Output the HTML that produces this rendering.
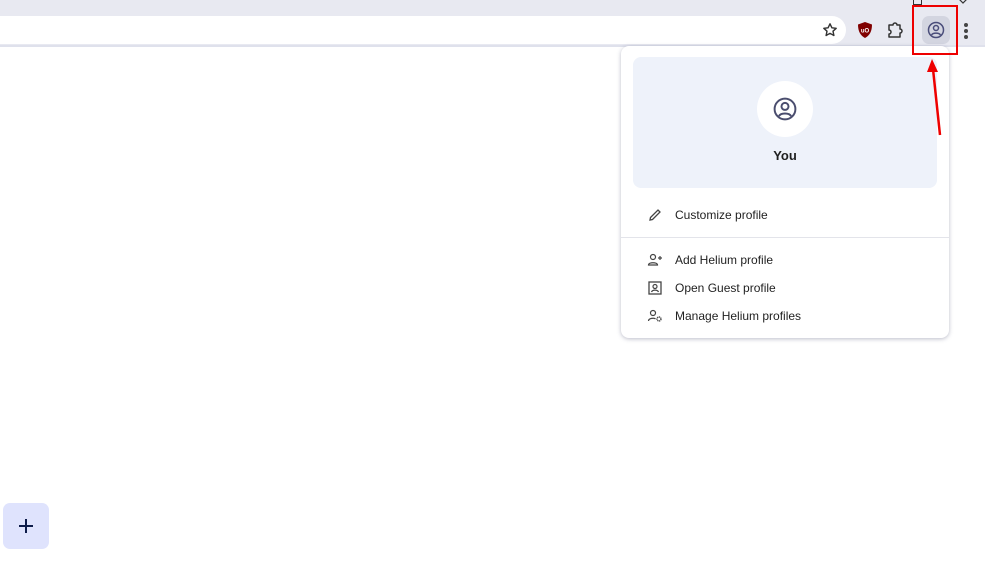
<!DOCTYPE html>
<html><head><style>
body{margin:0;width:985px;height:565px;background:#fff;position:relative;overflow:hidden;font-family:"Liberation Sans",sans-serif;}
.abs{position:absolute}
.item{position:absolute;left:675px;font-size:12px;color:#1f1f1f}
</style></head><body>
<div class="abs" style="left:0;top:0;width:985px;height:46px;background:#e8e9f1"></div>
<div class="abs" style="left:0;top:16px;width:846px;height:28px;background:#fff;border-radius:0 14px 14px 0"></div>
<div class="abs" style="left:0;top:45px;width:985px;height:2px;background:#dfe1ec"></div>
<svg class="abs" style="left:822px;top:22px" width="16" height="16" viewBox="0 0 16 16"><path d="M8 1.8l1.9 4 4.3.5-3.2 2.9.9 4.3L8 11.3 4.1 13.5 5 9.2 1.8 6.3l4.3-.5z" fill="none" stroke="#333" stroke-width="1.4" stroke-linejoin="round"/></svg>
<svg class="abs" style="left:857px;top:21px" width="16" height="18" viewBox="0 0 16 18"><path d="M8 1l7 2.5c0 7-2.5 11-7 13.5C3.5 14.5 1 10.5 1 3.5z" fill="#800000"/><text x="8" y="11.5" font-size="6" fill="#fff" text-anchor="middle" font-weight="bold" font-family="Liberation Sans">uO</text></svg>
<svg class="abs" style="left:886px;top:21px" width="18" height="18" viewBox="0 0 18 18"><path d="M3 4h4a2 2 0 014 0h3v4a2 2 0 010 4v4H3v-3a2 2 0 000-4z" fill="none" stroke="#333" stroke-width="1.5" stroke-linejoin="round"/></svg>
<div class="abs" style="left:922px;top:16px;width:28px;height:28px;background:#d3d5e0;border-radius:7px"></div>
<svg class="abs" style="left:926px;top:20px" width="20" height="20" viewBox="0 0 20 20"><circle cx="10" cy="10" r="7.5" fill="none" stroke="#4a4d7a" stroke-width="1.5"/><circle cx="10" cy="8" r="2.5" fill="none" stroke="#4a4d7a" stroke-width="1.5"/><path d="M5.5 15c1.5-2.5 7.5-2.5 9 0" fill="none" stroke="#4a4d7a" stroke-width="1.5"/></svg>
<div class="abs" style="left:964px;top:23px;width:4px;height:4px;border-radius:2px;background:#444"></div>
<div class="abs" style="left:964px;top:29px;width:4px;height:4px;border-radius:2px;background:#444"></div>
<div class="abs" style="left:964px;top:35px;width:4px;height:4px;border-radius:2px;background:#444"></div>
<div class="abs" style="left:913px;top:-3px;width:7px;height:6px;border:1px solid #333"></div>
<svg class="abs" style="left:957px;top:0" width="12" height="5" viewBox="0 0 12 5"><path d="M1 -2l5 5 5-5" fill="none" stroke="#333" stroke-width="1.2"/></svg>
<div class="abs" style="left:621px;top:46px;width:328px;height:292px;background:#fff;border-radius:8px;box-shadow:0 1px 4px rgba(60,64,100,.35)"></div>
<div class="abs" style="left:633px;top:57px;width:304px;height:131px;background:#eef2fa;border-radius:8px"></div>
<div class="abs" style="left:757px;top:81px;width:56px;height:56px;background:#fff;border-radius:50%"></div>
<svg class="abs" style="left:772px;top:96px" width="26" height="26" viewBox="0 0 20 20"><circle cx="10" cy="10" r="8" fill="none" stroke="#4a4d6e" stroke-width="1.5"/><circle cx="10" cy="8" r="2.7" fill="none" stroke="#4a4d6e" stroke-width="1.5"/><path d="M5.3 15.5c1.5-2.7 7.9-2.7 9.4 0" fill="none" stroke="#4a4d6e" stroke-width="1.5"/></svg>
<div class="abs" style="left:633px;top:148px;width:304px;text-align:center;font-size:13px;font-weight:bold;color:#1f1f1f">You</div>
<svg class="abs" style="left:648px;top:208px" width="14" height="14" viewBox="0 0 14 14"><path d="M2 12l.5-2.5L10 2l2 2-7.5 7.5z" fill="none" stroke="#444" stroke-width="1.3"/></svg>
<div class="item" style="top:208px">Customize profile</div>
<div class="abs" style="left:621px;top:237px;width:328px;height:1px;background:#e3e4ea"></div>
<svg class="abs" style="left:647px;top:253px" width="16" height="14" viewBox="0 0 16 14"><circle cx="6" cy="4" r="2.5" fill="none" stroke="#444" stroke-width="1.2"/><path d="M1.5 12c0-3 9-3 9 0z" fill="none" stroke="#444" stroke-width="1.2"/><path d="M11 5h4M13 3v4" stroke="#444" stroke-width="1.2"/></svg>
<div class="item" style="top:253px">Add Helium profile</div>
<svg class="abs" style="left:648px;top:281px" width="14" height="14" viewBox="0 0 14 14"><rect x="1" y="1" width="12" height="12" fill="none" stroke="#444" stroke-width="1.3"/><circle cx="7" cy="5.5" r="2" fill="none" stroke="#444" stroke-width="1.2"/><path d="M3.5 11c1-2.5 6-2.5 7 0" fill="none" stroke="#444" stroke-width="1.2"/></svg>
<div class="item" style="top:281px">Open Guest profile</div>
<svg class="abs" style="left:647px;top:309px" width="16" height="14" viewBox="0 0 16 14"><circle cx="6" cy="4" r="2.5" fill="none" stroke="#444" stroke-width="1.2"/><path d="M1.5 12c0-3 6-3.3 7-2" fill="none" stroke="#444" stroke-width="1.2"/><circle cx="12" cy="10" r="2" fill="none" stroke="#444" stroke-width="1.4" stroke-dasharray="1.2 .6"/></svg>
<div class="item" style="top:309px">Manage Helium profiles</div>
<div class="abs" style="left:912px;top:5px;width:42px;height:46px;border:2px solid #e00"></div>
<svg class="abs" style="left:920px;top:55px" width="30" height="85" viewBox="0 0 30 85"><path d="M20 80L13 14" stroke="#e00" stroke-width="2.5"/><path d="M12 4l-5 13h11z" fill="#e00"/></svg>
<div class="abs" style="left:3px;top:503px;width:46px;height:46px;background:#dfe3fd;border-radius:7px"></div>
<div class="abs" style="left:19px;top:525px;width:14px;height:2px;background:#0d1b4a"></div>
<div class="abs" style="left:25px;top:519px;width:2px;height:14px;background:#0d1b4a"></div>
</body></html>
